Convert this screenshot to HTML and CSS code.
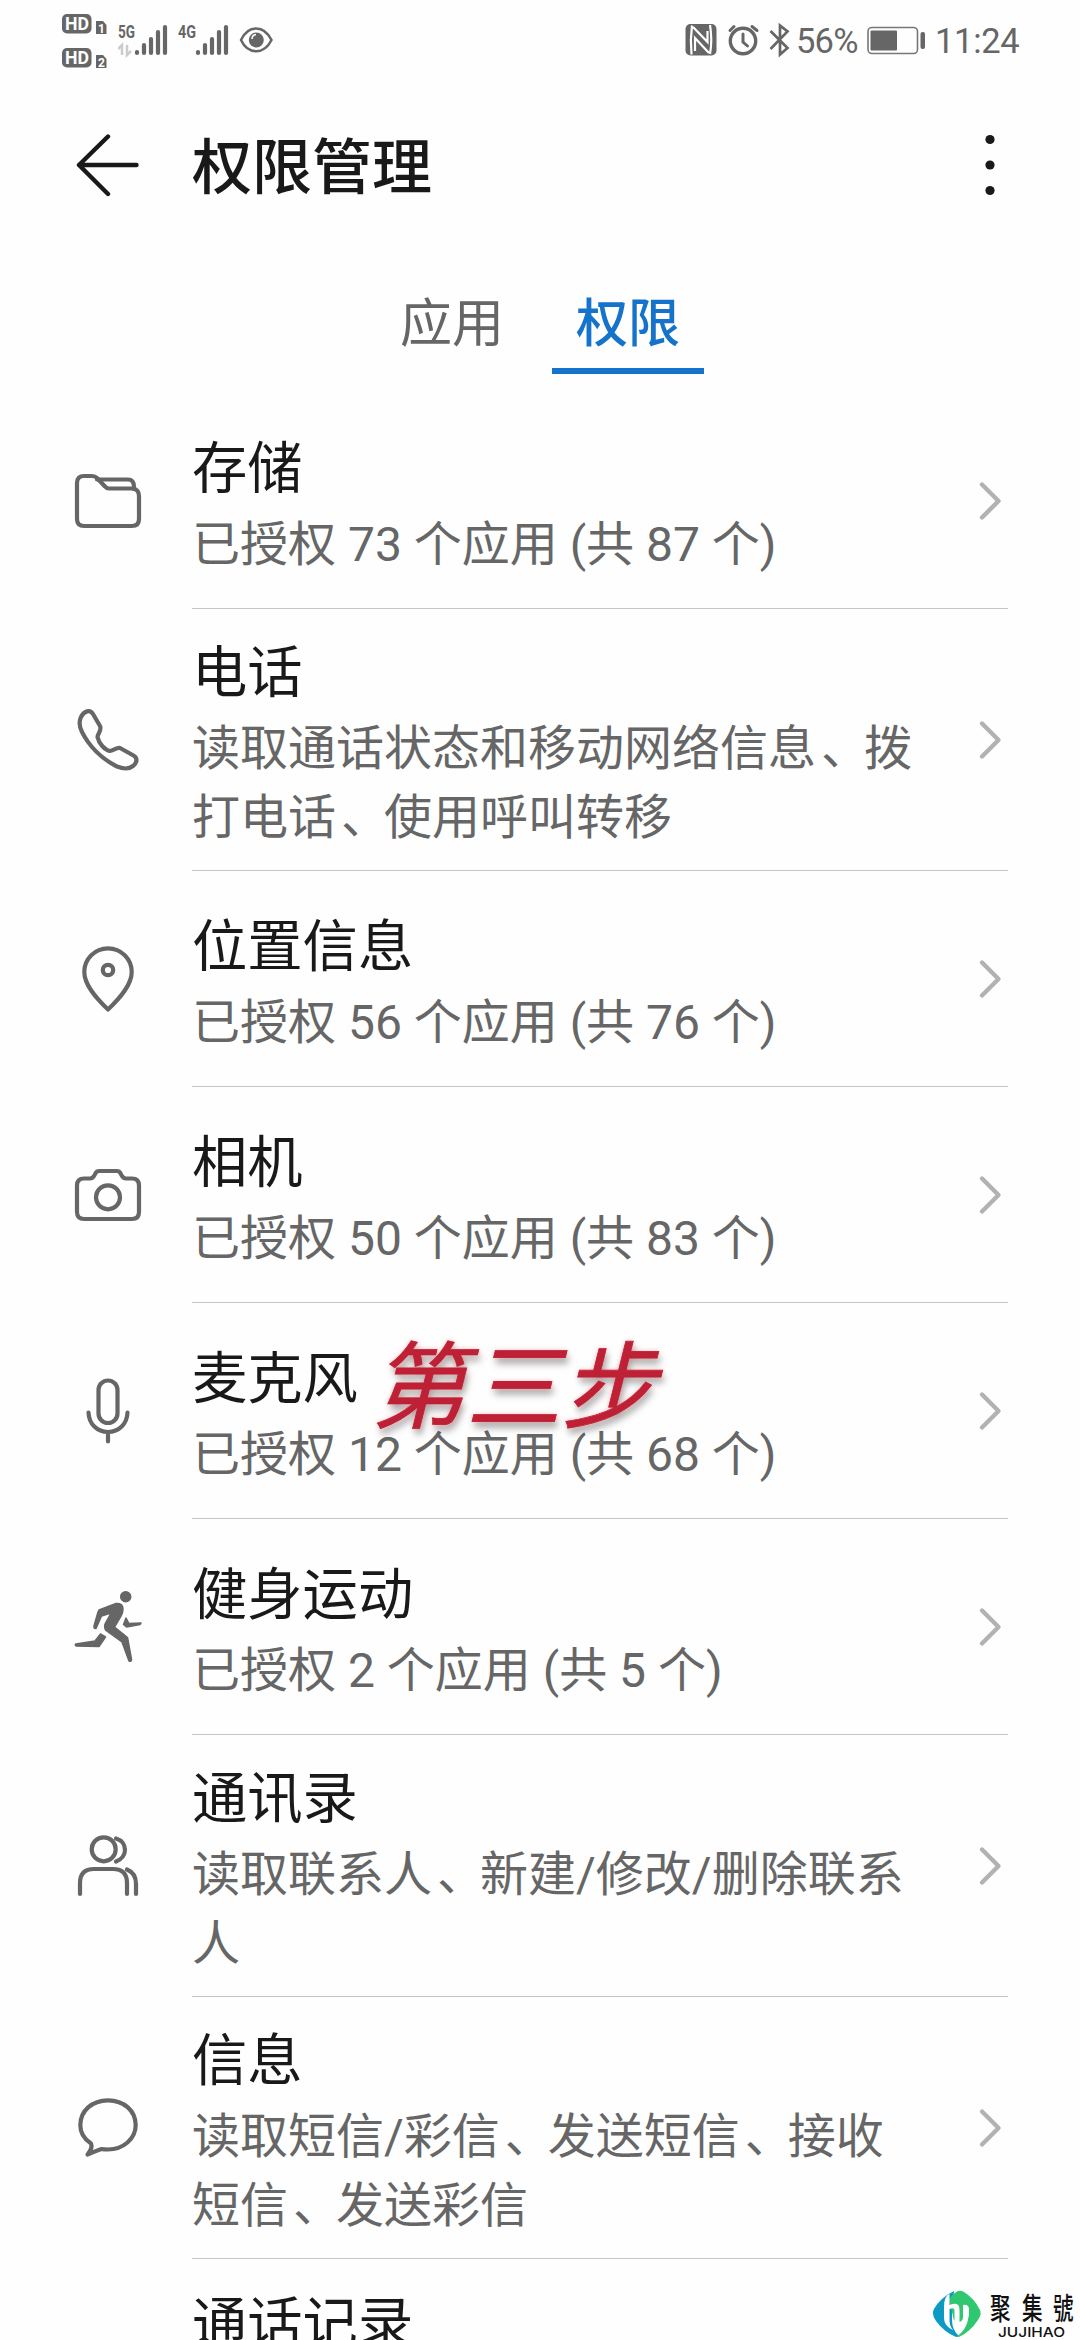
FILE: index.html
```html
<!DOCTYPE html>
<html lang="zh-CN">
<head>
<meta charset="utf-8">
<title>权限管理</title>
<link rel="stylesheet" href="styles.css">
</head>
<body>
<div class="screen">
  <div class="status">
    <svg class="hd" viewBox="60 0 48 80" width="48" height="80">
      <g fill="#666"><rect x="62" y="14" width="29.500" height="19.500" rx="5"/><rect x="62" y="48" width="29.500" height="19.500" rx="5"/>
      <path d="M96 21h7l3.500 4v9H96zM96 55h7l3.500 4v9H96z"/></g>
      <g class="badge-text"><text x="65" y="30" textLength="24" lengthAdjust="spacingAndGlyphs">HD</text><text x="65" y="64" textLength="24" lengthAdjust="spacingAndGlyphs">HD</text></g>
      <g class="badge-num"><text x="98" y="32.500">1</text><text x="98" y="66.500">2</text></g>
    </svg>
    <svg class="sig" viewBox="118 0 50 80" width="50" height="80">
      <text class="net" x="118" y="38" textLength="17" lengthAdjust="spacingAndGlyphs">5G</text>
      <path d="M118 49l4-4v10M127 45v10l4-4" fill="none" stroke="#ccc" stroke-width="2.500"/>
      <path class="bars" d="M137 52v1M144 45v8M151 39v14M158 32v21M165 27v26"/>
    </svg>
    <svg class="sig2" viewBox="178 0 52 80" width="52" height="80">
      <text class="net" x="178" y="38" textLength="18" lengthAdjust="spacingAndGlyphs">4G</text>
      <path class="bars" d="M198 52v1M205 45v8M212 39v14M219 32v21M226 27v26"/>
    </svg>
    <svg class="eye" viewBox="238 0 36 80" width="36" height="80">
      <path d="M241 40C248 24.500 264 24.500 271.500 40C264 55 248 55 241 40Z" fill="none" stroke="#666" stroke-width="2.500"/>
      <circle cx="256.300" cy="40" r="7.500" fill="#666"/><path d="M252 39q0-4 4-4.500" fill="none" stroke="#fff" stroke-width="1.500"/>
    </svg>
    <svg class="nfc" viewBox="684 0 34 80" width="34" height="80">
      <rect x="685.500" y="24" width="31" height="31.500" rx="5" fill="#666"/>
      <path d="M692 25.500Q690 40 691.500 54.500M710 25Q712.500 40 710 54" fill="none" stroke="#fff" stroke-width="2.200"/>
      <path d="M693 27L707.500 42V31M709 53L695 38V51" fill="none" stroke="#fff" stroke-width="2.200"/>
    </svg>
    <svg class="alarm" viewBox="726 0 36 80" width="36" height="80">
      <g fill="none" stroke="#666" stroke-width="3" stroke-linecap="round"><circle cx="743" cy="41" r="12.700" stroke-width="3.400"/><path d="M730 30.500l4-4M752 26.500l5 4M743 34v8l4.500 4"/></g>
    </svg>
    <svg class="bt" viewBox="768 0 24 80" width="24" height="80">
      <path d="M770.500 31L787.500 48L780 54.500V25.500L787.500 31.500L770.500 49" fill="none" stroke="#666" stroke-width="2.700"/>
    </svg>
    <span class="pct">56%</span>
    <svg class="battery" viewBox="866 0 60 80" width="60" height="80">
      <rect x="868" y="27.500" width="49.500" height="26" rx="4" fill="none" stroke="#777" stroke-width="1.600"/>
      <rect x="870.500" y="30.500" width="26.500" height="20" rx="1" fill="#666"/><rect x="920.500" y="32" width="4.500" height="17" rx="2" fill="#666"/>
    </svg>
    <span class="clock">11:24</span>
  </div>

  <header class="appbar">
    <svg class="back" viewBox="0 0 64 64" width="64" height="64"><path d="M33 3.500L4 32L33 61M4 32H61.500"/></svg>
    <h1>权限管理</h1>
    <svg class="more" viewBox="0 0 12 64" width="12" height="64"><circle cx="6" cy="6.500" r="4.600"/><circle cx="6" cy="32" r="4.600"/><circle cx="6" cy="57.500" r="4.600"/></svg>
  </header>

  <nav class="tabs"><span class="tab">应用</span><span class="tab active">权限</span></nav>

  <main class="list">
    <section class="row">
      <svg class="icon" viewBox="0 0 72 72"><path d="M12 11H20Q23 11 25 13L33 21.500Q34.500 23.500 37 23.500H60Q67 24 67 31V54Q67 61 60 61H12Q5 61 5 54V18Q5 11 12 11Z"/><path d="M25 14.500H56Q62 14.500 62 22V24" /></svg>
      <div class="body"><div class="text"><h2>存储</h2><p>已授权 73 个应用 (共 87 个)</p></div><svg class="chev" viewBox="0 0 24 40"><path d="M4 3.500L20.500 20L4 36.500"/></svg></div>
    </section>
    <section class="row tall">
      <svg class="icon" viewBox="0 0 72 72"><path d="M9 13C12 7 18 5 21 10L28 22C30 26 26 29 25.500 33C27 40 33 46 38 47C41 47 45 43 48 44L61.500 51.500C66 54 65 59 61 62C56 66 51 65 45 62.500C30 55 17 42 10 28C7 22 7 17 9 13Z"/></svg>
      <div class="body"><div class="text"><h2>电话</h2><p>读取通话状态和移动网络信息<i>、</i>拨<br>打电话<i>、</i>使用呼叫转移</p></div><svg class="chev" viewBox="0 0 24 40"><path d="M4 3.500L20.500 20L4 36.500"/></svg></div>
    </section>
    <section class="row">
      <svg class="icon" viewBox="0 0 72 72"><path d="M36 66.500C24 55 12.300 42 12.300 29A23.700 23.700 0 0 1 59.700 29C59.700 42 48 55 36 66.500Z"/><circle cx="36" cy="27" r="5.200"/></svg>
      <div class="body"><div class="text"><h2>位置信息</h2><p>已授权 56 个应用 (共 76 个)</p></div><svg class="chev" viewBox="0 0 24 40"><path d="M4 3.500L20.500 20L4 36.500"/></svg></div>
    </section>
    <section class="row">
      <svg class="icon" viewBox="0 0 72 72"><path d="M12 19.500H18Q20.500 19.500 22 17L24 13.500Q25 12 27 12H45Q47 12 48 13.500L50 17Q51.500 19.500 54 19.500H60Q67 19.500 67 26.500V53Q67 60 60 60H12Q5 60 5 53V26.500Q5 19.500 12 19.500Z"/><circle cx="36" cy="38.300" r="12"/></svg>
      <div class="body"><div class="text"><h2>相机</h2><p>已授权 50 个应用 (共 83 个)</p></div><svg class="chev" viewBox="0 0 24 40"><path d="M4 3.500L20.500 20L4 36.500"/></svg></div>
    </section>
    <section class="row">
      <svg class="icon" viewBox="0 0 72 72"><rect x="26.500" y="5.500" width="19" height="42.500" rx="9.500"/><path d="M16.500 37.500C17 49 25 57 36 57S55 49 55.500 37.500M36 57V66.500"/></svg>
      <div class="body"><div class="text"><h2>麦克风</h2><p>已授权 12 个应用 (共 68 个)</p></div><svg class="chev" viewBox="0 0 24 40"><path d="M4 3.500L20.500 20L4 36.500"/></svg></div>
      <span class="note">第三步</span>
    </section>
    <section class="row">
      <svg class="icon run" viewBox="0 0 72 72"><circle cx="53.700" cy="5.700" r="5"/><path d="M27 19L44 12.500Q51 12 51 18Q51 22 49 25L42.500 36L55.500 46.500L59.500 68.500Q59.500 71 57 70L50 51L34 39.500Q32 37 33 33L39 22L29.500 25L24 37.500Q21.500 38 22 35L26 21Z"/><path d="M54 27L57 32.500L69 32L68 33.500L54.500 36L51.500 33.500Z"/><path d="M28.500 43L33.500 46L27 55.500L4 55Q2.500 53.500 4 53L23 50Z"/></svg>
      <div class="body"><div class="text"><h2>健身运动</h2><p>已授权 2 个应用 (共 5 个)</p></div><svg class="chev" viewBox="0 0 24 40"><path d="M4 3.500L20.500 20L4 36.500"/></svg></div>
    </section>
    <section class="row tall">
      <svg class="icon" viewBox="0 0 72 72"><circle cx="31.700" cy="19.300" r="12"/><path d="M44 8.500C56 12 56 27 44 31.500M8 64V53Q8 39 22 39H41Q55 39 55 53V64M55 39.500Q64 43 64 54V64"/></svg>
      <div class="body"><div class="text"><h2>通讯录</h2><p>读取联系人<i>、</i>新建/修改/删除联系<br>人</p></div><svg class="chev" viewBox="0 0 24 40"><path d="M4 3.500L20.500 20L4 36.500"/></svg></div>
    </section>
    <section class="row tall">
      <svg class="icon" viewBox="0 0 72 72"><path d="M15.500 62.500Q21 56 19 51.500C12 47 8.300 40 8.300 33C8.300 19 20 8.300 36 8.300S63.700 19 63.700 33S51 57.500 36 57.500Q32 57.500 29.500 57Q24 59 15.500 62.500Z"/></svg>
      <div class="body"><div class="text"><h2>信息</h2><p>读取短信/彩信<i>、</i>发送短信<i>、</i>接收<br>短信<i>、</i>发送彩信</p></div><svg class="chev" viewBox="0 0 24 40"><path d="M4 3.500L20.500 20L4 36.500"/></svg></div>
    </section>
    <section class="row tall last"><div class="icon"></div><div class="body"><div class="text"><h2>通话记录</h2></div></div></section>
  </main>

  <div class="brand">
    <svg viewBox="0 0 50 48" width="50" height="48">
      <path d="M22 1Q8 8 2 19Q-1 24 4 31Q12 42 24 47L27 46Q20 40 20 30V24Z" fill="#0c9ac4"/>
      <path d="M17 10Q20 4 26 1Q29 0 32 2Q42 8 48 20Q50 24 46 30Q38 42 27 47H24Q38 38 36 20H31V33Q21 34 21 26Z" fill="#2fc870"/>
      <path d="M12 17Q12 6 17.500 4V15Q27 11 27.500 19V32Q31 31 31 27V15Q36.500 14 37 19Q38 34 27 44Q30 36 27 36.500Q22.500 37 22.500 32V20Q22 17 17.500 19V30Q17.500 36 21 40Q12 36 12 28Z" fill="#fff"/>
    </svg>
    <div class="brand-name">
      <svg width="98" height="50" viewBox="0 0 98 50"><g class="cn"><text x="8" y="29" textLength="20.500" lengthAdjust="spacingAndGlyphs">聚</text><text x="40" y="29" textLength="20.500" lengthAdjust="spacingAndGlyphs">集</text><text x="71" y="29" textLength="20.500" lengthAdjust="spacingAndGlyphs">號</text></g><text class="en" x="16" y="46.500" textLength="67" lengthAdjust="spacingAndGlyphs">JUJIHAO</text></svg>
    </div>
  </div>
</div>
</body>
</html>
```
FILE: styles.css
```css
* { box-sizing: border-box; margin: 0; padding: 0; }
body { background: #fefefe; font-family: Roboto, "Noto Sans CJK SC", sans-serif; }
.screen { position: relative; width: 1080px; height: 2340px; overflow: hidden; display: flex; flex-direction: column; }
svg { display: block; flex: none; }

.status { display: flex; height: 80px; flex: none; padding-left: 60px; color: #666; }
.sig, .sig2 { margin-left: 10px; }
.eye { margin-left: 8px; }
.nfc { margin-left: 410px; }
.alarm { margin-left: 8px; }
.bt { margin-left: 6px; }
.pct, .clock { font-size: 34.500px; line-height: 82px; white-space: nowrap; }
.pct { width: 70px; margin-left: 4px; letter-spacing: -0.800px; }
.clock { margin-left: 9px; letter-spacing: -0.300px; }
.bars { stroke: #666; stroke-width: 4.200px; stroke-linecap: round; fill: none; }
.net { font: bold 17.500px Roboto, sans-serif; fill: #666; }
.badge-text { font: bold 18px Roboto, sans-serif; fill: #fff; }
.badge-num { font: bold 12px Roboto, sans-serif; fill: #fff; }

.appbar { display: flex; align-items: center; height: 170px; flex: none; padding: 0 84px 0 75px; }
.back { fill: none; stroke: #191919; stroke-width: 4.400px; stroke-linecap: round; stroke-linejoin: round; }
.appbar h1 { flex: 1; margin-left: 53px; padding-top: 7px; font-size: 60px; line-height: 80px; font-weight: 500; color: #191919; }
.more { fill: #191919; }

.tabs { display: flex; justify-content: center; gap: 24px; height: 142px; flex: none; padding-top: 32px; }
.tab { height: 92px; padding: 0 24px; font-size: 52px; line-height: 86px; color: #666; }
.active { color: #1573cc; font-weight: 500; border-bottom: 6px solid #1573cc; }

.row { position: relative; display: flex; align-items: center; height: 216px; padding-left: 72px; }
.tall { height: 262px; }
.icon { width: 72px; height: 72px; flex: none; margin-top: 2px; fill: none; stroke: #666; stroke-width: 4.200px; stroke-linecap: round; stroke-linejoin: round; overflow: visible; }
.run { fill: #666; stroke-width: 1.500px; }
.body { display: flex; align-items: center; flex: 1; height: calc(100% + 1px); margin: 0 72px -1px 48px; padding-top: 2px; border-bottom: 1px solid #c4c4c4; }
.text { flex: 1; padding-top: 6px; white-space: nowrap; }
.row h2 { font-size: 55.300px; line-height: 80px; font-weight: 400; color: #191919; }
.row p { font-size: 48px; line-height: 69px; color: #666; }
.row p i { font-style: normal; position: relative; left: 5px; top: -1px; }
.chev { width: 24px; height: 40px; margin-right: 6px; fill: none; stroke: #b2b2b2; stroke-width: 4.400px; stroke-linecap: round; stroke-linejoin: round; }
.last { align-items: flex-start; }
.last .body { align-items: flex-start; padding-top: 21px; }

.note { position: absolute; left: 371px; top: 17px; font-size: 95px; line-height: 140px; font-style: italic; font-weight: 400; -webkit-text-stroke: 0.800px #be2036; color: #be2036; white-space: nowrap; text-shadow: 0 0 5px rgba(255, 60, 70, .35), 2px 6px 7px rgba(0, 0, 0, .35); }

.brand { position: absolute; left: 932px; top: 2290px; display: flex; }
.cn { font: 500 30px "Noto Sans CJK TC", sans-serif; fill: #111; }
.en { font: 500 13.500px Inter, sans-serif; fill: #111; }
```
